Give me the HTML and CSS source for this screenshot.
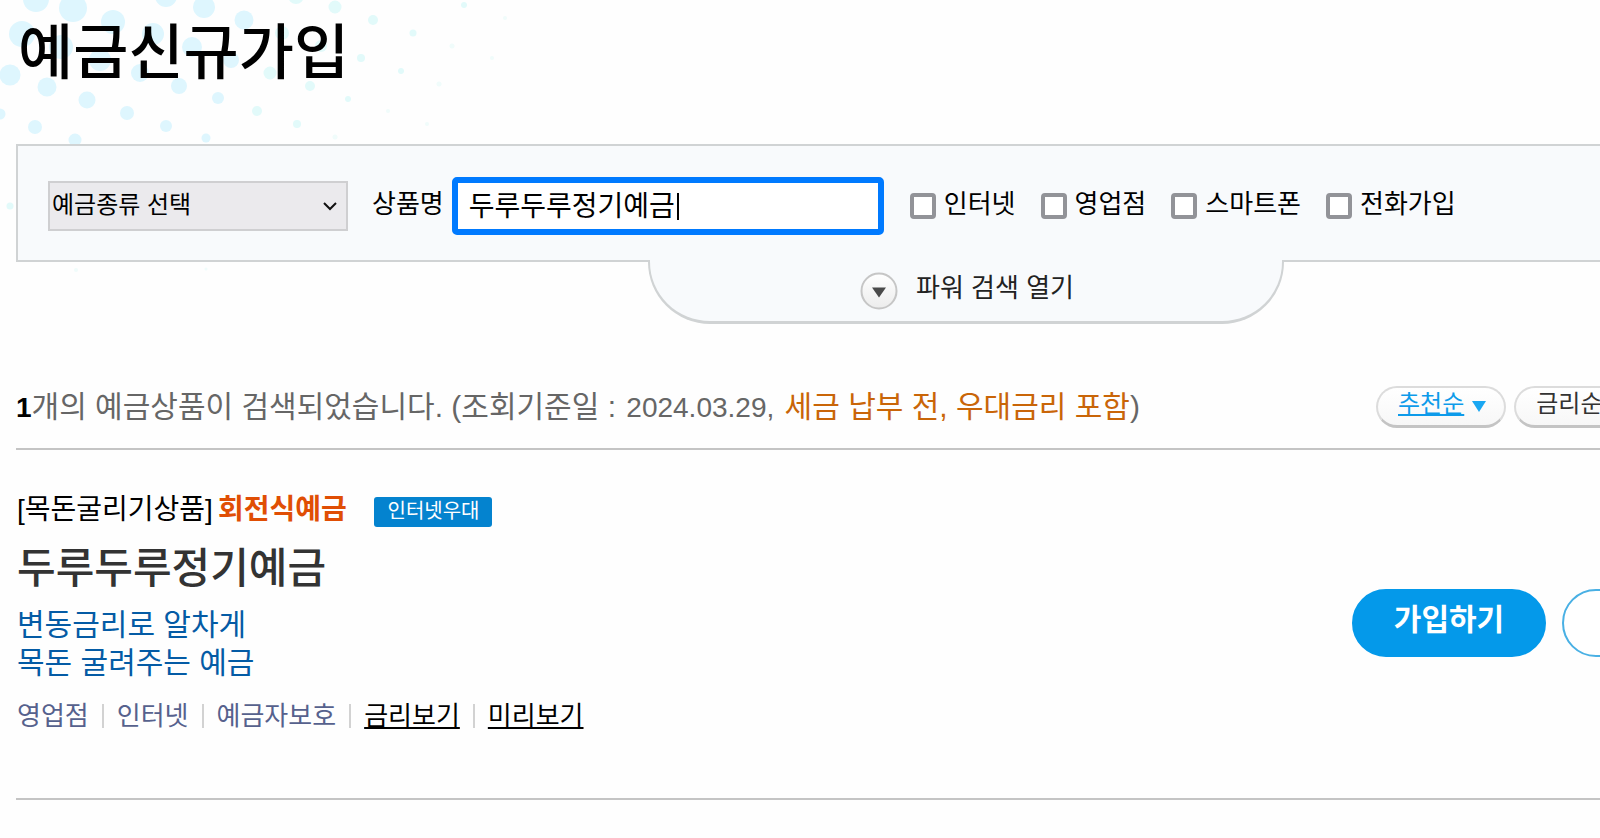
FILE: index.html
```html
<!DOCTYPE html>
<html lang="ko">
<head>
  <meta charset="UTF-8">
  <meta name="viewport" content="width=device-width, initial-scale=1.0">
  <title>예금신규가입</title>
  <link rel="stylesheet" href="styles.css">
</head>
<body>
  <svg class="dots" width="560" height="340" viewBox="0 0 560 340" aria-hidden="true">
    <g fill="#def6fe">
      <circle cx="36" cy="-1" r="13"/><circle cx="73" cy="8" r="14"/><circle cx="113" cy="22" r="12"/>
      <circle cx="166" cy="-4" r="11"/><circle cx="204" cy="7" r="11"/><circle cx="244" cy="20" r="9.5"/>
      <circle cx="22" cy="34" r="13"/><circle cx="61" cy="47" r="12"/><circle cx="100" cy="60" r="11"/>
      <circle cx="153" cy="34" r="11"/><circle cx="192" cy="47" r="10"/><circle cx="231" cy="60" r="8"/>
      <circle cx="10" cy="75" r="10.5"/><circle cx="47" cy="87" r="9.5"/><circle cx="87" cy="100" r="8.5"/>
      <circle cx="127" cy="113" r="7"/><circle cx="166" cy="126" r="6"/><circle cx="206" cy="138" r="4.5"/>
      <circle cx="0" cy="114" r="5.5"/><circle cx="35" cy="127" r="7"/><circle cx="75" cy="140" r="6.5"/>
      <circle cx="140" cy="73" r="9"/><circle cx="179" cy="86" r="8"/><circle cx="218" cy="98" r="6"/>
    </g>
    <g fill="#e2fafa">
      <circle cx="296" cy="-4" r="8"/><circle cx="335" cy="7" r="6.5"/><circle cx="373" cy="20" r="5"/>
      <circle cx="282" cy="33" r="7"/><circle cx="321" cy="46" r="6"/><circle cx="361" cy="58" r="4"/>
      <circle cx="270" cy="73" r="6.5"/><circle cx="310" cy="86" r="5"/><circle cx="348" cy="99" r="3"/>
      <circle cx="257" cy="111" r="5"/><circle cx="297" cy="124" r="4"/><circle cx="401" cy="71" r="3"/>
      <circle cx="413" cy="33" r="3.5"/><circle cx="464" cy="5" r="3"/><circle cx="10" cy="206" r="3.5"/>
    </g>
    <g fill="#f0fcfb">
      <circle cx="335" cy="137" r="2.5"/><circle cx="388" cy="111" r="2"/><circle cx="427" cy="124" r="2"/>
      <circle cx="439" cy="84" r="2.5"/><circle cx="452" cy="46" r="2.5"/><circle cx="492" cy="58" r="2"/>
      <circle cx="505" cy="18" r="2"/><circle cx="76" cy="270" r="2"/><circle cx="206" cy="269" r="1.5"/>
    </g>
  </svg>

  <div class="page">
    <h1>예금신규가입</h1>

    <form class="search">
      <select class="kind" aria-label="예금종류 선택">
        <option>예금종류 선택</option>
      </select>
      <label class="name-label" for="name">상품명</label>
      <div class="name-box">
        <input type="text" id="name" value="두루두루정기예금">
        <span class="caret"></span>
      </div>
      <div class="channels">
        <label><input type="checkbox"> <span>인터넷</span></label>
        <label><input type="checkbox"> <span>영업점</span></label>
        <label><input type="checkbox"> <span>스마트폰</span></label>
        <label><input type="checkbox"> <span>전화가입</span></label>
      </div>
    </form>
    <button type="button" class="power">
      <svg width="38" height="38" viewBox="0 0 38 38" aria-hidden="true">
        <defs>
          <linearGradient id="knob" x1="0" y1="0" x2="0" y2="1">
            <stop offset="0" stop-color="#fff"/>
            <stop offset="1" stop-color="#ececec"/>
          </linearGradient>
        </defs>
        <circle cx="19" cy="19" r="17.5" fill="url(#knob)" stroke="#c6c6c6" stroke-width="2"/>
        <path d="M12 15.5h14l-7 10z" fill="#4a4a4a"/>
      </svg>
      <span>파워 검색 열기</span>
    </button>

    <div class="result-bar">
      <p class="result"><strong>1</strong>개의 예금상품이 검색되었습니다. (조회기준일 : <time>2024.03.29,</time> <em>세금 납부 전, 우대금리 포함</em>)</p>
      <div class="sort">
        <a href="#" class="on"><span>추천순</span>
          <svg width="14" height="11" viewBox="0 0 14 11" aria-hidden="true"><path d="M0 0h14L7 11z" fill="#1aa7f2"/></svg>
        </a>
        <a href="#"><span>금리순</span></a>
      </div>
    </div>

    <div class="product">
      <div class="info">
        <p class="category">[목돈굴리기상품]<strong>회전식예금</strong> <span class="badge">인터넷우대</span></p>
        <h2>두루두루정기예금</h2>
        <p class="desc">변동금리로 알차게<br>목돈 굴려주는 예금</p>
        <ul class="tags">
          <li>영업점</li>
          <li>인터넷</li>
          <li>예금자보호</li>
          <li><a href="#">금리보기</a></li>
          <li><a href="#">미리보기</a></li>
        </ul>
      </div>
      <div class="actions">
        <button type="button" class="join">가입하기</button>
        <button type="button" class="more" aria-label="상세보기"></button>
      </div>
    </div>
  </div>
</body>
</html>
```
FILE: styles.css
```css
* {
  box-sizing: border-box;
}

body {
  margin: 0;
  overflow: hidden;
  background: #fefefe;
  color: #000;
  font-family: "Liberation Sans", "Noto Sans CJK KR", sans-serif;
  font-size: 26px;
}

h1, h2, p, ul {
  margin: 0;
  padding: 0;
}

input, select, button {
  font-family: inherit;
  font-size: inherit;
  color: inherit;
}

.dots {
  position: absolute;
  top: 0;
  left: 0;
}

/* the content runs on past the right edge of the window */
.page {
  position: relative;
  width: calc(100% + 300px);
  margin-left: 16px;
}

h1 {
  padding: 19px 0 0 2px;
  height: 144px;
  font-size: 60px;
  font-weight: 500;
  line-height: 70px;
}

/* search */
.search {
  display: flex;
  align-items: center;
  height: 118px;
  padding: 6px 30px 0;
  background: #f8fafc;
  border: 2px solid #d0d3d4;
}

.kind {
  appearance: none;
  width: 300px;
  height: 50px;
  padding: 0 2px 4px;
  border: 2px solid #cfcfd1;
  border-radius: 0;
  background: #ebeaed url("data:image/svg+xml,%3Csvg xmlns='http://www.w3.org/2000/svg' width='16' height='10'%3E%3Cpath d='M2 2l6 6 6-6' fill='none' stroke='%23111' stroke-width='2'/%3E%3C/svg%3E") no-repeat right 8px center;
  font-size: 24px;
}

.name-label {
  margin: 0 8px 0 24px;
  padding-bottom: 10px;
}

.name-box {
  position: relative;
}

.name-box input {
  display: block;
  width: 432px;
  height: 58px;
  padding: 0 11px 4px;
  border: 6px solid #007aff;
  border-radius: 5px;
  background: #fff;
  font-size: 28px;
  outline: none;
}

.caret {
  position: absolute;
  top: 16px;
  left: 225px;
  width: 2px;
  height: 27px;
  background: #000;
}

.channels {
  display: flex;
  gap: 25px;
  margin-left: 26px;
}

.channels label {
  display: flex;
  align-items: center;
  gap: 8px;
}

.channels span {
  padding-bottom: 10px;
}

.channels input {
  appearance: none;
  width: 26px;
  height: 26px;
  margin: 0;
  border: 4px solid #929398;
  border-radius: 4px;
  background: #fff;
}

.power {
  position: relative;
  display: flex;
  align-items: center;
  justify-content: center;
  gap: 18px;
  width: 636px;
  height: 64px;
  margin: -2px auto 0;
  padding: 0 0 0 2px;
  border: 2px solid #d0d3d4;
  border-top: 0;
  border-bottom-width: 3px;
  border-radius: 0 0 62px 62px;
  background: #f8fafc;
  color: #222;
}

.power span {
  padding-bottom: 10px;
}

/* result count and sort order */
.result-bar {
  display: flex;
  align-items: center;
  height: 126px;
  padding-top: 42px;
  border-bottom: 2px solid #c4c4c4;
}

.result {
  color: #666;
  font-size: 30px;
  line-height: 40px;
}

.result strong {
  color: #000;
  font-size: 28px;
}

.result time {
  margin: 0 2px;
  font-size: 28px;
}

.result em {
  color: #c96508;
  font-style: normal;
}

.sort {
  display: flex;
  gap: 8px;
  width: 540px;
  margin-left: auto;
}

.sort a {
  display: flex;
  align-items: center;
  gap: 8px;
  height: 42px;
  padding: 0 18px 0 20px;
  border: 2px solid #dcdcdc;
  border-bottom: 3px solid #c4c4c4;
  border-radius: 21px;
  background: linear-gradient(#fff, #f7f7f7);
  color: #333;
  font-size: 24px;
  text-decoration: none;
}

.sort span {
  padding-bottom: 10px;
}

.sort .on {
  color: #0d9bea;
}

.sort .on span {
  text-decoration: underline;
}

/* product */
.product {
  display: flex;
  align-items: center;
  height: 350px;
  padding-bottom: 2px;
  border-bottom: 2px solid #c4c4c4;
}

.info {
  align-self: flex-start;
  padding: 40px 0 0 1px;
}

.category {
  font-size: 28px;
  line-height: 40px;
}

.category strong {
  margin-left: 5px;
  color: #e04e04;
}

.badge {
  display: inline-block;
  height: 30px;
  margin-left: 20px;
  padding: 0 13px;
  border-radius: 3px;
  background: #0483cf;
  color: #fff;
  font-size: 20px;
  line-height: 28px;
  vertical-align: middle;
}

h2 {
  margin: 12px 0 10px;
  color: #333;
  font-size: 42px;
  font-weight: 500;
  line-height: 54px;
}

.desc {
  color: #045ba5;
  font-size: 30px;
  line-height: 38px;
}

.tags {
  display: flex;
  align-items: center;
  margin-top: 15px;
  list-style: none;
  color: #56618d;
  line-height: 38px;
}

.tags li {
  display: flex;
  align-items: center;
}

.tags li + li::before {
  content: "";
  width: 2px;
  height: 24px;
  margin: 0 13px;
  background: #d2d2d2;
}

.tags a {
  color: #000;
  text-decoration: underline;
}

.actions {
  display: flex;
  gap: 16px;
  width: 564px;
  margin-left: auto;
}

.actions button {
  width: 194px;
  height: 68px;
  padding: 0 0 12px;
  border: 2px solid #0499ea;
  border-radius: 34px;
}

.actions .join {
  background: #0499ea;
  color: #fff;
  font-size: 30px;
  font-weight: bold;
}

.actions .more {
  border-color: #49b0e4;
  background: #fff;
}
```
